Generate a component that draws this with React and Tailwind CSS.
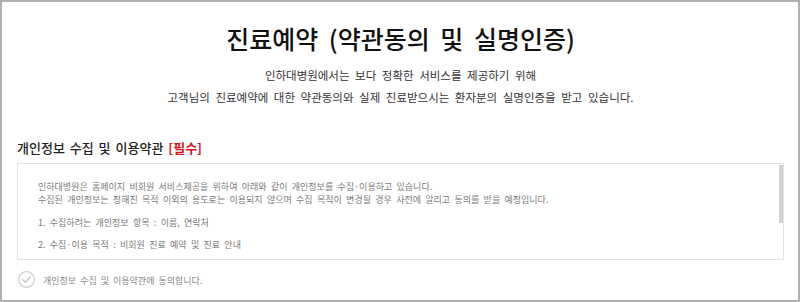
import React from 'react';

const CheckCircle = () => (
  <svg width="17" height="17" viewBox="0 0 17 17" className="shrink-0">
    <circle cx="8.5" cy="8.5" r="7.8" fill="white" stroke="#cfcfcf" strokeWidth="1.2" />
    <path d="M4.8 8.7 L7.5 11.3 L12.3 5.9" fill="none" stroke="#c8c8c8" strokeWidth="1.3" strokeLinecap="round" strokeLinejoin="round" />
  </svg>
);

const App = () => {
  return (
    <div className="w-[800px] h-[302px] box-border border-2 border-[#b0b0b0] bg-white overflow-hidden pl-[15px] pr-[14px] font-['Noto_Sans_CJK_KR','Noto_Sans',sans-serif]">
      <h1 className="mt-[20px] text-center text-[25px] leading-[32px] font-medium text-[#111] [word-spacing:5px]">
        진료예약 (약관동의 및 실명인증)
      </h1>

      <div className="mt-[10px] text-center text-[11.5px] leading-[22px] text-[#333] [word-spacing:3px]">
        <p>인하대병원에서는 보다 정확한 서비스를 제공하기 위해</p>
        <p>고객님의 진료예약에 대한 약관동의와 실제 진료받으시는 환자분의 실명인증을 받고 있습니다.</p>
      </div>

      <h2 className="mt-[31px] text-[13px] leading-[18px] font-medium text-[#222] [word-spacing:2px]">
        개인정보 수집 및 이용약관 <span className="font-bold text-[#d8141f]">[필수]</span>
      </h2>

      <div className="relative mt-[6px] h-[97px] border border-[#e3e3e3] pl-[20px] pt-[16px] text-[9px] text-[#7a7a7a] [word-spacing:2.3px]">
        <p className="leading-[13px]">인하대병원은 홈페이지 비회원 서비스제공을 위하여 아래와 같이 개인정보를 수집·이용하고 있습니다.</p>
        <p className="leading-[13px]">수집된 개인정보는 정해진 목적 이외의 용도로는 이용되지 않으며 수집 목적이 변경될 경우 사전에 알리고 동의를 받을 예정입니다.</p>
        <p className="mt-[10px] leading-[13px]">1. 수집하려는 개인정보 항목 : 이름, 연락처</p>
        <p className="mt-[9px] leading-[13px]">2. 수집·이용 목적 : 비회원 진료 예약 및 진료 안내</p>
        <div className="absolute right-0 top-[1px] w-[4px] h-[58px] bg-[#d2d2d2]" />
      </div>

      <label className="mt-[10px] flex items-center gap-[8px] pl-[1px]">
        <CheckCircle />
        <span className="pt-[2px] text-[9px] leading-[17px] text-[#888] [word-spacing:2px]">개인정보 수집 및 이용약관에 동의합니다.</span>
      </label>
    </div>
  );
};

export default App;
